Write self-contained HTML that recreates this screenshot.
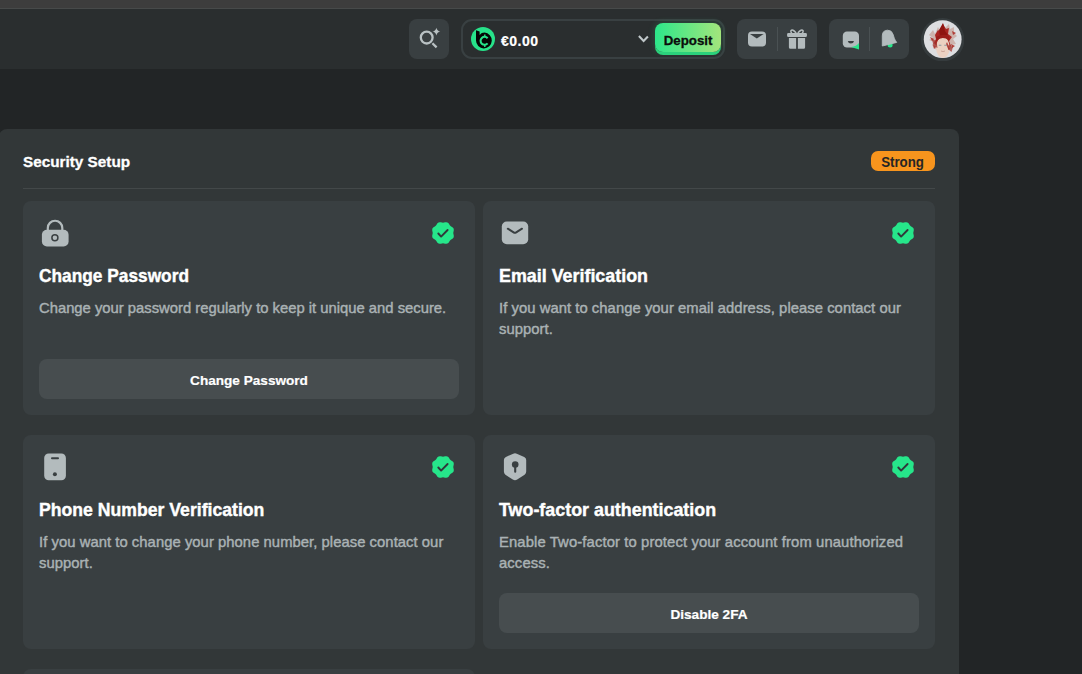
<!DOCTYPE html>
<html><head><meta charset="utf-8">
<style>
*{box-sizing:border-box;margin:0;padding:0}
html,body{width:1082px;height:674px;overflow:hidden;background:#222526;font-family:"Liberation Sans",sans-serif;position:relative}
.abs{position:absolute}
svg{display:block}
#strip{left:0;top:0;width:1082px;height:8px;background:#3d3d3d}
#stripline{left:0;top:8px;width:1082px;height:1px;background:#474a4a}
#header{left:0;top:9px;width:1082px;height:60px;background:#2a2e2f}
.hbtn{background:#393f41;border-radius:8px}
#search{left:409px;top:19px;width:40px;height:40px}
#wallet{left:461px;top:19px;width:264px;height:40px;border:2px solid #394042;border-radius:11px;background:#2a2e2f}
#coin{left:471px;top:27px;width:24px;height:24px}
#amount{left:501px;top:31.5px;font-weight:bold;font-size:14px;letter-spacing:0.5px;color:#fff;-webkit-text-stroke:0.2px #fff;line-height:18px}
#chev{left:637px;top:34px}
#deposit{left:655px;top:23px;width:66px;height:29px;border-radius:8px;background:linear-gradient(90deg,#2ce78a,#a3e57c);box-shadow:0 3px 0 #2bd27c,0 0 6px 1px rgba(60,230,140,0.18);color:#0b0d0c;-webkit-text-stroke:0.3px #0b0d0c;font-weight:bold;font-size:13.7px;line-height:36px;text-align:center}
#deposit span{display:inline-block;transform:scaleX(0.97)}
#grp1{left:737px;top:19px;width:80px;height:40px}
#grp2{left:829px;top:19px;width:80px;height:40px}
.vdiv{position:absolute;top:8px;width:1px;height:24px;background:#4a5153;left:40px}
#avatar{left:921px;top:18px;width:43px;height:43px}
#panel{left:-1px;top:129px;width:960px;height:600px;background:#323738;border-radius:8px}
#ptitle{left:23px;top:153.2px;font-weight:bold;font-size:15.3px;color:#fff;-webkit-text-stroke:0.3px #fff;line-height:18px}
#strong{left:871px;top:151px;width:64px;height:20px;border-radius:7px;background:#f7941d;color:#252525;font-weight:bold;font-size:14px;line-height:22.6px;text-align:center}
#strong span{display:inline-block;transform:scaleX(0.95)}
#pdiv{left:23px;top:188px;width:912px;height:1px;background:#434849}
.card{position:absolute;width:452px;height:214px;background:#393f41;border-radius:8px}
.card .ico{position:absolute;left:16px;top:16px;width:32px;height:32px}
.card .chk{position:absolute;left:408px;top:19.5px;width:24px;height:24px}
.card h3{position:absolute;left:16px;top:63.9px;font-weight:bold;font-size:18.5px;color:#fff;-webkit-text-stroke:0.4px #fff;line-height:22px;white-space:nowrap;transform:scaleX(0.935);transform-origin:0 0}
.card p{position:absolute;left:16px;top:96.8px;width:440px;font-weight:normal;font-size:14.8px;color:#aab2b4;-webkit-text-stroke:0.42px #aab2b4;line-height:21px;white-space:nowrap}
.card .btn{position:absolute;left:16px;top:158px;width:420px;height:40px;padding-top:3.6px;background:#474d4f;border-radius:8px;color:#fff;-webkit-text-stroke:0.2px #fff;font-weight:bold;font-size:13.6px;line-height:36.4px;text-align:center}
.card .btn span{display:inline-block}
</style></head><body>
<svg width="0" height="0" style="position:absolute">
 <defs>
  <symbol id="badge" viewBox="0 0 24 24">
   <path fill="#26e68a" d="M22.3 12.0L22.4 13.0L22.7 14.1L22.8 15.3L22.6 16.4L22.0 17.3L21.1 18.1L20.1 18.6L19.3 19.3L18.6 20.1L18.1 21.1L17.3 22.0L16.4 22.6L15.3 22.8L14.1 22.7L13.0 22.4L12.0 22.3L11.0 22.4L9.9 22.7L8.7 22.8L7.6 22.6L6.7 22.0L5.9 21.1L5.4 20.1L4.7 19.3L3.9 18.6L2.9 18.1L2.0 17.3L1.4 16.4L1.2 15.3L1.3 14.1L1.6 13.0L1.7 12.0L1.6 11.0L1.3 9.9L1.2 8.7L1.4 7.6L2.0 6.7L2.9 5.9L3.9 5.4L4.7 4.7L5.4 3.9L5.9 2.9L6.7 2.0L7.6 1.4L8.7 1.2L9.9 1.3L11.0 1.6L12.0 1.7L13.0 1.6L14.1 1.3L15.3 1.2L16.4 1.4L17.3 2.0L18.1 2.9L18.6 3.9L19.3 4.7L20.1 5.4L21.1 5.9L22.0 6.7L22.6 7.6L22.8 8.7L22.7 9.9L22.4 11.0Z"/>
   <path d="M7.3 12.5L10.1 15.6L16.6 9" fill="none" stroke="#30373a" stroke-width="1.9" stroke-linecap="round" stroke-linejoin="round"/>
  </symbol>
 </defs>
</svg>
<div id="strip" class="abs"></div>
<div id="stripline" class="abs"></div>
<div id="header" class="abs"></div>

<div id="search" class="abs hbtn">
 <svg width="40" height="40" viewBox="0 0 40 40">
  <circle cx="17.7" cy="18.6" r="5.9" fill="none" stroke="#b9c1c3" stroke-width="2.3"/>
  <path d="M23.4 24.3L27.6 28.4" stroke="#b9c1c3" stroke-width="2.3"/>
  <path d="M27.4 8.7Q28.1 11.9 31.3 12.6Q28.1 13.3 27.4 16.5Q26.7 13.3 23.5 12.6Q26.7 11.9 27.4 8.7Z" fill="#b9c1c3"/>
 </svg>
</div>
<div id="wallet" class="abs"></div>
<div id="coin" class="abs">
 <svg width="24" height="24" viewBox="0 0 24 24">
  <circle cx="12" cy="12" r="12" fill="#27e28a"/>
  <path d="M5 3.2L8.6 4.4L8.6 8Q10.5 5.6 13.5 5.6A7.9 7.9 0 1 1 5 13.5Z" fill="#050505"/>
  <path d="M16.6 11.2A4 4 0 1 0 16.6 16.4" fill="none" stroke="#27e28a" stroke-width="2.1"/>
  <path d="M13.8 7.4V9.8M13.8 17.6V20" stroke="#27e28a" stroke-width="1.4"/>
 </svg>
</div>
<div id="amount" class="abs">€0.00</div>
<div id="chev" class="abs">
 <svg width="14" height="10" viewBox="0 0 14 10"><path d="M1.9 2.1L6.6 6.9L10.9 2.4" fill="none" stroke="#c0c8ca" stroke-width="2.1"/></svg>
</div>
<div id="deposit" class="abs"><span>Deposit</span></div>
<div id="grp1" class="abs hbtn"><div class="vdiv"></div>
 <svg width="80" height="40" viewBox="0 0 80 40" style="position:absolute;left:0;top:0">
  <rect x="11" y="12.4" width="18" height="15.2" rx="4" fill="#b3bbbd"/>
  <path d="M13 15.1H26.6L19.8 19.6Z" fill="#393f41"/>
  <rect x="50.1" y="14.1" width="19.8" height="3.8" rx="1.2" fill="#b3bbbd"/>
  <path d="M51.9 18.9H59.1V29.7H53.4A1.5 1.5 0 0 1 51.9 28.2ZM60.9 18.9H68.1V28.2A1.5 1.5 0 0 1 66.6 29.7H60.9Z" fill="#b3bbbd"/>
  <path d="M59.2 14Q55.5 9.5 53.9 11.8Q53.3 13.2 55 14M60.8 14Q64.5 9.5 66.1 11.8Q66.7 13.2 65 14" fill="none" stroke="#b3bbbd" stroke-width="1.5"/>
 </svg>
</div>
<div id="grp2" class="abs hbtn"><div class="vdiv"></div>
 <svg width="80" height="40" viewBox="0 0 80 40" style="position:absolute;left:0;top:0">
  <rect x="13.8" y="12.6" width="16.2" height="16" rx="4.2" fill="#b3bbbd"/>
  <path d="M18.8 21.9H25Q24.5 24.6 21.9 24.6Q19.3 24.6 18.8 21.9Z" fill="#393f41"/>
  <path d="M22.1 28Q27.5 27.6 30 24V30.5Z" fill="#27e68a"/>
  <circle cx="61.1" cy="25.9" r="2.5" fill="#27e68a"/>
  <path d="M53.3 17Q53.2 11.4 58.6 11.2Q62.8 11.2 64 15.2L65.3 19.3Q66.2 21.6 67.7 23.4L53.3 27Z" fill="#b3bbbd" stroke="#b3bbbd" stroke-width="0.9" stroke-linejoin="round"/>
 </svg>
</div>
<div id="avatar" class="abs">
 <svg width="43" height="43" viewBox="0 0 43 43"><defs><clipPath id="avc"><circle cx="21.7" cy="21.2" r="18.9"/></clipPath></defs>
  <circle cx="21.7" cy="21.7" r="21.7" fill="#353b3d"/>
  <circle cx="21.7" cy="21.2" r="18.9" fill="#dddee1"/>
  <g clip-path="url(#avc)"><g opacity="0.75">
   <path d="M8 17L12 12L14 16L17 9L19 13L22 5L24 10L28 6L29 11L33 9L33 15L36 18L32 21L35 26L30 27L31 31L27 30L24 34L19 33L14 31L11 27L13 24L8 22L12 20Z" fill="#c7a49b"/>
  </g>
  <path d="M14 17L17 12L20 14L22 6L25 11L28 10L27 16L31 19L28 23L30 28L26 30L24 25L19 25L16 28L13 25L15 21Z" fill="#a82522"/>
  <path d="M18 12L22 5L24 13L27 17L19 18Z" fill="#8e1410"/>
  <path d="M9 19L13 21L11 23ZM31 13L35 15L32 17ZM30 26L34 28L31 30ZM12 27L15 29L13 31Z" fill="#b0403a"/>
  <ellipse cx="21.9" cy="29.5" rx="6.8" ry="10.5" fill="#ebd1c2"/>
  <path d="M15.5 23Q21 17.5 28.5 22.5L28 18Q22 15 15 19Z" fill="#9a1d19"/><path d="M26 24L29 31L27.5 32L25 26Z" fill="#a82522" opacity="0.8"/><path d="M11 21L15.5 23L16.5 30L12.5 28Z" fill="#a3302b" opacity="0.75"/><path d="M27.5 27L32 29L30.5 34L27 31Z" fill="#a3302b" opacity="0.7"/>
  <path d="M17.8 27.2h2.6M23.3 27.2h2.6" stroke="#8a9aa0" stroke-width="1.1"/>
  <path d="M20 33Q22 34.3 24 33" stroke="#c9a295" stroke-width="0.9" fill="none"/></g>
 </svg>
</div>

<div id="panel" class="abs"></div>
<div id="ptitle" class="abs">Security Setup</div>
<div id="strong" class="abs"><span>Strong</span></div>
<div id="pdiv" class="abs"></div>

<div class="card" style="left:23px;top:201px">
  <svg class="ico" viewBox="0 0 32 32">
   <path d="M8.8 13V11A7.25 7.25 0 0 1 23.3 11V13" fill="none" stroke="#b3bbbd" stroke-width="2.2"/>
   <rect x="2.9" y="12.7" width="26.7" height="16.7" rx="5" fill="#b3bbbd"/>
   <circle cx="15.9" cy="20.8" r="3" fill="none" stroke="#393f41" stroke-width="1.5"/>
  </svg>
  <svg class="chk"><use href="#badge"/></svg>
  <h3>Change Password</h3>
  <p>Change your password regularly to keep it unique and secure.</p>
  <div class="btn"><span>Change Password</span></div>
</div>
<div class="card" style="left:483px;top:201px">
  <svg class="ico" viewBox="0 0 32 32">
   <rect x="2.8" y="4.6" width="26.4" height="22.6" rx="5" fill="#b3bbbd"/>
   <path d="M8.8 11.7L14.6 15.3Q15.9 16.1 17.2 15.3L23 11.7" fill="none" stroke="#393f41" stroke-width="2" stroke-linecap="round"/>
  </svg>
  <svg class="chk"><use href="#badge"/></svg>
  <h3 style="transform:scaleX(0.966)">Email Verification</h3>
  <p style="letter-spacing:0.05px">If you want to change your email address, please contact our<br>support.</p>
</div>
<div class="card" style="left:23px;top:435px">
  <svg class="ico" viewBox="0 0 32 32">
   <rect x="5.2" y="2.5" width="21.7" height="26.7" rx="4.5" fill="#b3bbbd"/>
   <path d="M13 7.3H19" stroke="#393f41" stroke-width="2" stroke-linecap="round"/>
   <circle cx="15.9" cy="23.3" r="2" fill="#393f41"/>
  </svg>
  <svg class="chk"><use href="#badge"/></svg>
  <h3 style="transform:scaleX(0.953)">Phone Number Verification</h3>
  <p style="letter-spacing:0.05px">If you want to change your phone number, please contact our<br>support.</p>
</div>
<div class="card" style="left:483px;top:435px">
  <svg class="ico" viewBox="0 0 32 32">
   <path d="M14.2 2.7Q16 2 17.8 2.7L25.2 5.9Q27.2 6.8 27.2 9V20.5Q27.2 22.5 25.6 23.8L18.2 28.5Q16 30 13.8 28.5L6.4 23.8Q4.9 22.5 4.9 20.5V9Q4.9 6.8 6.9 5.9Z" fill="#b3bbbd"/>
   <circle cx="16.2" cy="13.5" r="3.3" fill="#393f41"/>
   <path d="M16.2 14V20.8" stroke="#393f41" stroke-width="2.1" stroke-linecap="round"/>
  </svg>
  <svg class="chk"><use href="#badge"/></svg>
  <h3 style="transform:scaleX(0.966)">Two-factor authentication</h3>
  <p style="letter-spacing:0.12px">Enable Two-factor to protect your account from unauthorized<br>access.</p>
  <div class="btn"><span>Disable 2FA</span></div>
</div>
<div class="card" style="left:23px;top:669px"></div>
</body></html>
